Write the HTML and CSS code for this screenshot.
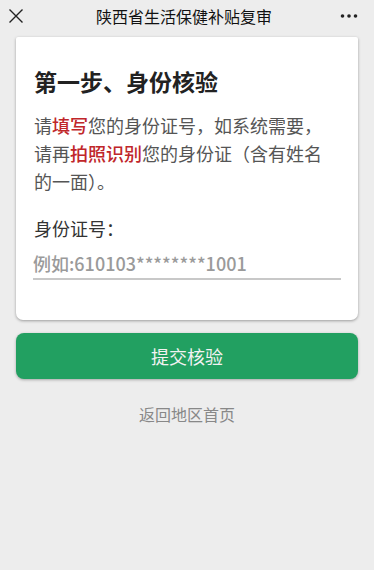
FILE: index.html
```html
<!DOCTYPE html>
<html lang="zh-CN">
<head>
<meta charset="utf-8">
<meta name="viewport" content="width=device-width, initial-scale=1">
<title>陕西省生活保健补贴复审</title>
<link rel="stylesheet" href="styles.css">
</head>
<body>
<header class="topbar">
  <span class="close" aria-label="关闭">
    <svg width="16" height="16" viewBox="0 0 16 16"><path d="M1.5 1.5 L14.5 14.5 M14.5 1.5 L1.5 14.5" stroke="#222" stroke-width="1.4" fill="none"/></svg>
  </span>
  <h1 class="title">陕西省生活保健补贴复审</h1>
  <span class="more" aria-label="更多">
    <svg width="18" height="6" viewBox="0 0 18 6"><circle cx="2.5" cy="3" r="1.8" fill="#222"/><circle cx="9" cy="3" r="1.8" fill="#222"/><circle cx="15.5" cy="3" r="1.8" fill="#222"/></svg>
  </span>
</header>
<main class="page">
  <section class="card">
    <h2 class="step">第一步、身份核验</h2>
    <p class="intro">请<em>填写</em>您的身份证号，如系统需要，请再<em>拍照识别</em>您的身份证（含有姓名的一面）。</p>
    <label class="label" for="idno">身份证号：</label>
    <input class="field" id="idno" type="text" placeholder="例如:610103********1001">
  </section>
  <button class="submit" type="button">提交核验</button>
  <a class="back" href="#">返回地区首页</a>
</main>
</body>
</html>
```

FILE: styles.css
```css
html, body {
  margin: 0;
  padding: 0;
  background: #ededed;
  font-family: "Noto Sans CJK SC", "Noto Sans", sans-serif;
}
.topbar {
  height: 32px;
  display: flex;
  align-items: center;
  justify-content: space-between;
  padding: 0 16px 0 8px;
  background: #ededed;
}
.close, .more {
  display: flex;
  align-items: center;
  width: 20px;
}
.more { justify-content: flex-end; }
.title {
  margin: 0;
  font-size: 16px;
  font-weight: 400;
  color: #111;
  line-height: 32px;
  padding-left: 2px;
}
.page {
  display: flex;
  flex-direction: column;
  padding: 5px 16px 0;
}
.card {
  background: #fff;
  border-radius: 2px 2px 7px 7px;
  box-shadow: 0 1px 3px rgba(0,0,0,0.35);
  padding: 29px 17px 40px 18px;
  display: flex;
  flex-direction: column;
}
.step {
  margin: 0;
  font-size: 23px;
  line-height: 30px;
  font-weight: 700;
  color: #222;
}
.intro {
  margin: 15px 0 0;
  padding-right: 12px;
  font-size: 18px;
  line-height: 28px;
  color: #555;
}
.intro em {
  font-style: normal;
  font-weight: 500;
  color: #c0262a;
}
.label {
  margin-top: 19px;
  font-size: 18px;
  line-height: 28px;
  color: #333;
}
.field {
  margin-top: 6px;
  margin-left: -1px;
  border: 0;
  border-bottom: 2px solid #c8c8c8;
  padding: 0;
  height: 30px;
  font-family: "Noto Sans CJK SC", sans-serif;
  font-size: 18px;
  font-weight: 500;
  color: #333;
  background: transparent;
  outline: none;
}
.field::placeholder {
  color: #9a9a9a;
}
.submit {
  margin-top: 13px;
  height: 46px;
  border: 0;
  border-radius: 8px;
  background: #22a061;
  box-shadow: 0 1px 3px rgba(0,0,0,0.3);
  color: #f2f2f2;
  font-family: "Noto Sans CJK SC", sans-serif;
  font-size: 18px;
}
.back {
  margin-top: 23px;
  align-self: center;
  font-size: 16px;
  line-height: 24px;
  color: #888;
  text-decoration: none;
}
```
